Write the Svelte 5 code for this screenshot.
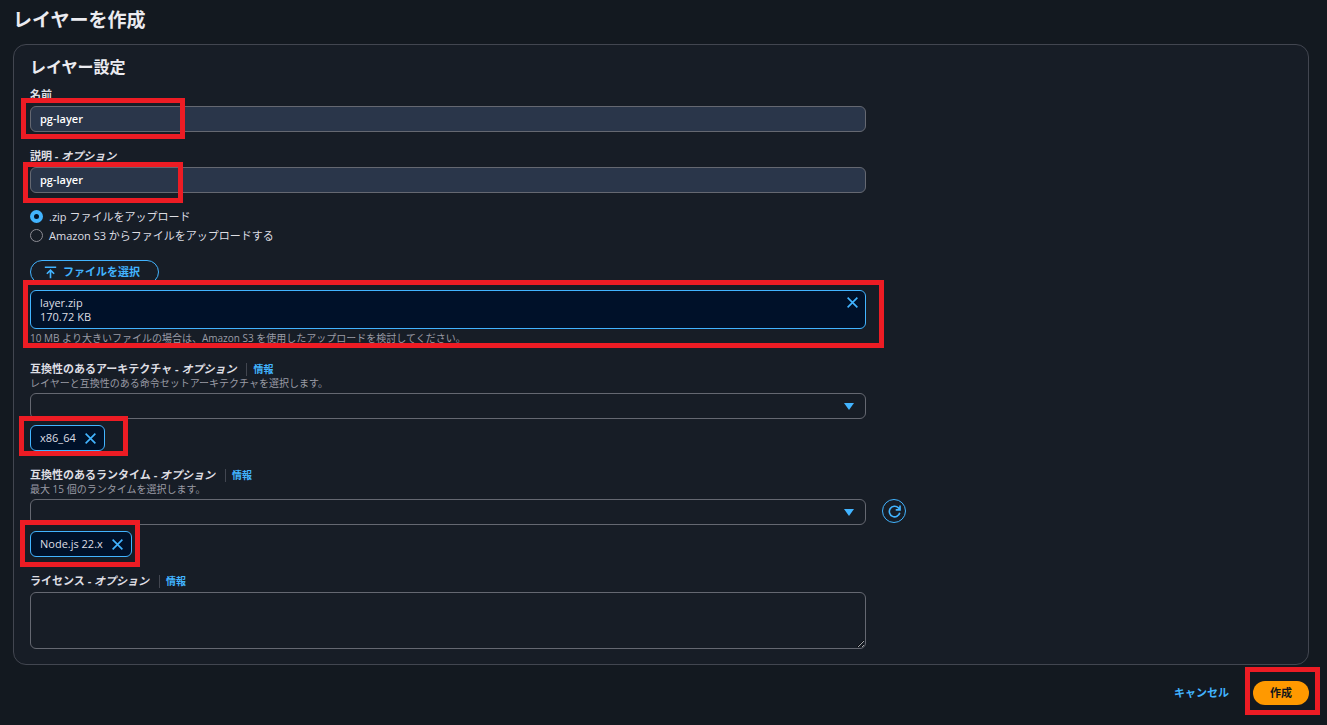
<script>
  let name = $state('pg-layer');
  let description = $state('pg-layer');
  let source = $state('zip');
  let file = $state({ name: 'layer.zip', size: '170.72 KB' });
  let architectures = $state(['x86_64']);
  let runtimes = $state(['Node.js 22.x']);
  let license = $state('');
</script>

{#snippet closeIcon()}
  <svg class="icon" viewBox="0 0 16 16" aria-hidden="true">
    <path d="M2 2l12 12M14 2L2 14" />
  </svg>
{/snippet}

{#snippet caret()}
  <svg class="caret" viewBox="0 0 10 8" aria-hidden="true">
    <path d="M0 1h10L5 8z" />
  </svg>
{/snippet}

{#snippet tag(text, remove)}
  <div class="tag">
    <span>{text}</span>
    <button type="button" class="icon-button" aria-label="{text} を削除" onclick={remove}>
      {@render closeIcon()}
    </button>
  </div>
{/snippet}

<main class="page">
  <h1>レイヤーを作成</h1>

  <form id="layer-form" class="panel" onsubmit={(e) => e.preventDefault()}>
    <h2>レイヤー設定</h2>

    <div class="field">
      <div class="label-row"><label for="name">名前</label></div>
      <div class="control">
        <input id="name" class="box" type="text" bind:value={name} />
        <span class="mark mark-name"></span>
      </div>
    </div>

    <div class="field">
      <div class="label-row"><label for="description">説明 - <i>オプション</i></label></div>
      <div class="control">
        <input id="description" class="box" type="text" bind:value={description} />
        <span class="mark mark-description"></span>
      </div>
    </div>

    <div class="field radios">
      <label>
        <input type="radio" name="source" value="zip" bind:group={source} />
        .zip ファイルをアップロード
      </label>
      <label>
        <input type="radio" name="source" value="s3" bind:group={source} />
        Amazon S3 からファイルをアップロードする
      </label>
    </div>

    <div class="field">
      <button type="button" class="upload">
        <svg class="icon" viewBox="0 0 16 16" aria-hidden="true">
          <path d="M1 1.5h14M8 15V5M3.5 9.5L8 5l4.5 4.5" />
        </svg>
        ファイルを選択
      </button>
      <div class="upload-result">
        {#if file}
          <div class="file">
            <div>
              <div>{file.name}</div>
              <div>{file.size}</div>
            </div>
            <button type="button" class="icon-button" aria-label="ファイルを削除" onclick={() => (file = null)}>
              {@render closeIcon()}
            </button>
          </div>
        {/if}
        <p class="hint">10 MB より大きいファイルの場合は、Amazon S3 を使用したアップロードを検討してください。</p>
        <span class="mark mark-file"></span>
      </div>
    </div>

    <div class="field">
      <div class="label-row">
        <label for="architectures">互換性のあるアーキテクチャ - <i>オプション</i></label>
        <a href="#info-architectures">情報</a>
      </div>
      <p class="hint">レイヤーと互換性のある命令セットアーキテクチャを選択します。</p>
      <div class="control">
        <select id="architectures" class="box"><option></option></select>
        {@render caret()}
      </div>
      <div class="tags">
        {#each architectures as item}
          {@render tag(item, () => (architectures = architectures.filter((a) => a !== item)))}
        {/each}
        <span class="mark mark-architecture"></span>
      </div>
    </div>

    <div class="field">
      <div class="label-row">
        <label for="runtimes">互換性のあるランタイム - <i>オプション</i></label>
        <a href="#info-runtimes">情報</a>
      </div>
      <p class="hint">最大 15 個のランタイムを選択します。</p>
      <div class="control">
        <select id="runtimes" class="box"><option></option></select>
        {@render caret()}
      </div>
      <button type="button" class="refresh" aria-label="更新">
        <svg class="icon" viewBox="0 0 16 16" aria-hidden="true">
          <path d="M14.5 9.5A6.5 6.5 0 1 1 12.8 3.5L14.5 5.5M14.8 0.5v5.5H9.5" />
        </svg>
      </button>
      <div class="tags">
        {#each runtimes as item}
          {@render tag(item, () => (runtimes = runtimes.filter((r) => r !== item)))}
        {/each}
        <span class="mark mark-runtime"></span>
      </div>
    </div>

    <div class="field">
      <div class="label-row">
        <label for="license">ライセンス - <i>オプション</i></label>
        <a href="#info-license">情報</a>
      </div>
      <div class="control">
        <textarea id="license" class="box" bind:value={license}></textarea>
      </div>
    </div>
  </form>

  <footer class="actions">
    <button type="button" class="cancel">キャンセル</button>
    <div class="submit">
      <button type="submit" form="layer-form" class="primary">作成</button>
      <span class="mark mark-submit"></span>
    </div>
  </footer>
</main>

<style>
  :global(body) {
    background: #131920;
  }

  .page {
    --blue: #42b4ff;
    --text: #dedee3;
    --muted: #9a9ba5;
    --line: #656871;
    box-sizing: border-box;
    padding: 8px 18px 20px 13px;
    color: var(--text);
    font: 11px/16px 'Open Sans', 'Noto Sans CJK JP', sans-serif;
  }

  .page * {
    box-sizing: border-box;
  }

  h1,
  h2,
  p {
    margin: 0;
  }

  h1 {
    margin-bottom: 12px;
    font-size: 19px;
    line-height: 24px;
    color: #ebebf0;
  }

  h2 {
    margin-bottom: 10px;
    font-size: 16px;
    line-height: 20px;
    color: #ebebf0;
  }

  button,
  input,
  select,
  textarea {
    margin: 0;
    color: inherit;
    font: inherit;
  }

  button {
    padding: 0;
    border: 0;
    background: none;
    cursor: pointer;
  }

  a {
    color: var(--blue);
    text-decoration: none;
  }

  .panel {
    padding: 12px 16px 15px;
    border: 1px solid #424650;
    border-radius: 13px;
    background: #171d26;
  }

  .field {
    display: grid;
    grid-template-columns: repeat(12, 1fr);
    column-gap: 16px;
  }

  .field + .field {
    margin-top: 16px;
  }

  .field > * {
    grid-column: 1 / span 8;
  }

  .label-row {
    display: flex;
    align-items: center;
    font-weight: 700;
  }

  .label-row a {
    margin-left: 10px;
    padding-left: 6px;
    border-left: 1px solid #424650;
    font-size: 10px;
    line-height: 13px;
  }

  .hint {
    color: var(--muted);
    font-size: 10px;
    line-height: 13px;
  }

  .control {
    position: relative;
    margin-top: 3px;
  }

  .box {
    display: block;
    width: 100%;
    height: 26px;
    padding: 0 10px;
    border: 1px solid var(--line);
    border-radius: 6px;
    outline: 0;
    background: transparent;
  }

  input.box {
    padding: 0 9px 2px;
    background: #2a364a;
    color: #fff;
    font-weight: 600;
  }

  select.box {
    appearance: none;
  }

  textarea.box {
    height: 57px;
    padding: 4px 10px;
    resize: vertical;
  }

  .caret {
    position: absolute;
    top: 9px;
    right: 12px;
    width: 10px;
    height: 8px;
    fill: var(--blue);
    pointer-events: none;
  }

  .radios {
    row-gap: 3px;
  }

  .radios label {
    display: flex;
    align-items: flex-start;
    gap: 6px;
  }

  .radios input {
    width: 13px;
    height: 13px;
    margin-top: 1px;
    border: 1px solid #8c8c94;
    border-radius: 50%;
    appearance: none;
  }

  .radios input:checked {
    border: 4px solid var(--blue);
    background: #001129;
  }

  .icon {
    display: block;
    width: 13px;
    height: 13px;
    fill: none;
    stroke: currentColor;
    stroke-width: 2;
  }

  .icon-button {
    color: var(--blue);
  }

  .upload {
    display: flex;
    align-items: center;
    justify-self: start;
    gap: 6px;
    height: 24px;
    padding: 0 18px 0 13px;
    border: 1px solid var(--blue);
    border-radius: 12px;
    color: var(--blue);
    font-weight: 700;
  }

  .upload-result {
    position: relative;
    margin-top: 6px;
  }

  .file {
    display: flex;
    align-items: flex-start;
    justify-content: space-between;
    margin-bottom: 3px;
    padding: 5px 6px 4px 9px;
    border: 1px solid var(--blue);
    border-radius: 6px;
    background: #001129;
    line-height: 14px;
  }

  .tags {
    position: relative;
    display: flex;
    gap: 6px;
    margin-top: 6px;
  }

  .tag {
    display: flex;
    align-items: center;
    gap: 8px;
    height: 26px;
    padding: 0 7px 0 9px;
    border: 1px solid var(--blue);
    border-radius: 6px;
    background: #001129;
  }

  .field > .refresh {
    display: flex;
    grid-column: 9;
    align-items: center;
    align-self: start;
    justify-content: center;
    width: 24px;
    height: 24px;
    margin-top: 3px;
    border: 1px solid var(--blue);
    border-radius: 50%;
    color: var(--blue);
  }

  .actions {
    display: flex;
    align-items: center;
    justify-content: flex-end;
    gap: 24px;
    margin-top: 16px;
  }

  .cancel {
    color: var(--blue);
    font-weight: 700;
  }

  .submit {
    position: relative;
  }

  .primary {
    display: block;
    height: 24px;
    padding: 0 17px;
    border-radius: 12px;
    background: #ff9900;
    color: #0f141a;
    font-weight: 700;
  }

  /* red highlight frames laid over the form */
  .mark {
    position: absolute;
    border: 5px solid #ed1c24;
    pointer-events: none;
  }

  .mark-name {
    top: -8px;
    left: -9px;
    width: 164px;
    height: 41px;
  }

  .mark-description {
    top: -5px;
    left: -7px;
    width: 160px;
    height: 41px;
  }

  .mark-file {
    top: -10px;
    right: -18px;
    left: -7px;
    height: 68px;
  }

  .mark-architecture {
    top: -9px;
    left: -11px;
    width: 109px;
    height: 40px;
  }

  .mark-runtime {
    top: -11px;
    left: -10px;
    width: 120px;
    height: 47px;
  }

  .mark-submit {
    top: -14px;
    right: -11px;
    width: 75px;
    height: 48px;
  }
</style>
